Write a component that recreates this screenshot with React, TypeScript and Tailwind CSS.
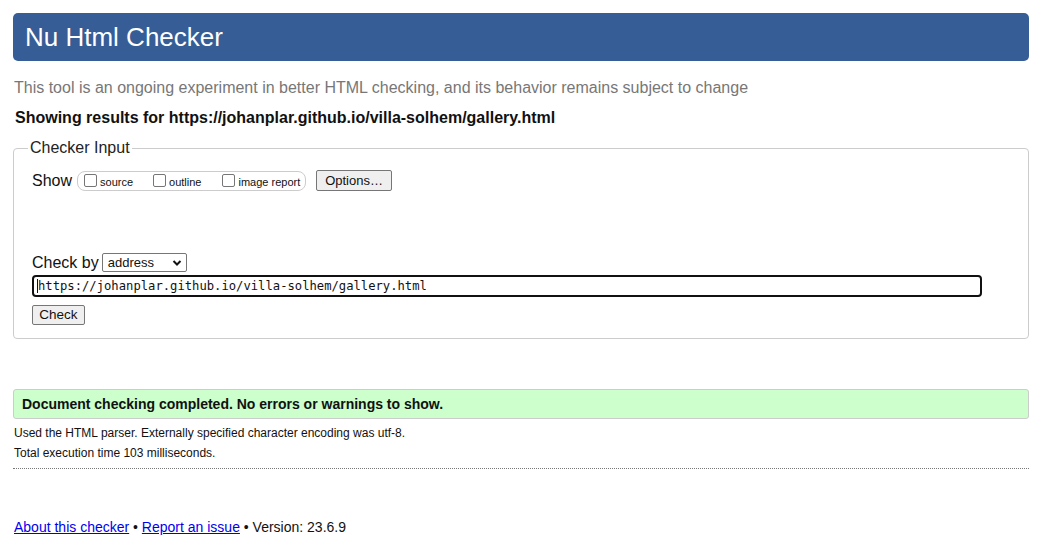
import React from "react";

function Box({ label }: { label: string }) {
  return (
    <span className="flex items-end">
      <span className="block w-[13px] h-[13px] border border-[#767676] rounded-[2px] bg-white" />
      <span className="ml-[3px] text-[11px] leading-[11px] mb-[-1px] text-[#111]">{label}</span>
    </span>
  );
}

export default function App() {
  return (
    <div
      className="bg-white w-[1041px] h-[555px] overflow-hidden pl-[13px] pr-[12px] pt-[13px] text-[#111]"
      style={{ fontFamily: '"Liberation Sans", Arial, sans-serif' }}
    >
      <div className="h-[48px] flex items-center pl-[12px] rounded-[5px] bg-[#365d95] text-white text-[26px] leading-[30px]">
        Nu Html Checker
      </div>
      <p className="mt-[18px] h-[18px] leading-[18px] text-[16px] text-[#777] pl-[1px]">
        This tool is an ongoing experiment in better HTML checking, and its behavior remains subject to change
      </p>
      <p className="mt-[12px] h-[18px] leading-[18px] text-[16px] font-bold pl-[2px]">
        Showing results for https://johanplar.github.io/villa-solhem/gallery.html
      </p>
      <fieldset className="mt-[12px] border border-[#ccc] rounded-[4px] pl-[18px] pb-[13px] h-[200px]">
        <legend className="-ml-[4px] px-[2px] text-[16px] leading-[18px] text-[#222]">Checker Input</legend>
        <div className="mt-[13px] flex items-center h-[21px]">
          <span className="text-[16px] leading-[18px]">Show</span>
          <span className="ml-[5px] flex items-center h-[20px] w-[229px] border border-[#ccc] rounded-[8px] pl-[6px]">
            <Box label="source" />
            <span className="w-[20px]" />
            <Box label="outline" />
            <span className="w-[21px]" />
            <Box label="image report" />
          </span>
          <span className="ml-[10px] flex items-center justify-center w-[76px] h-[21px] border border-[#767676] rounded-[2px] bg-[#efefef] text-[13px]">
            Options…
          </span>
        </div>
        <div className="mt-[62px] flex items-center h-[19px]">
          <span className="text-[16px] leading-[18px]">Check by</span>
          <span className="ml-[3px] flex items-center justify-between w-[85px] h-[19px] border border-[#767676] rounded-[2px] bg-white pl-[5px] pr-[4px] text-[13px]">
            address
            <svg width="10" height="8" viewBox="0 0 10 8">
              <path d="M1.5 2 L5 5.5 L8.5 2" fill="none" stroke="#111" strokeWidth="2" />
            </svg>
          </span>
        </div>
        <div className="mt-[3px] h-[22px] w-[950px] border-2 border-[#111] rounded-[4px] flex items-center pl-[3px]">
          <span className="border-l border-[#111] h-[14px]" />
          <span
            className="text-[12.2px] leading-[14px]"
            style={{ fontFamily: '"DejaVu Sans Mono", "Liberation Mono", monospace' }}
          >
            https://johanplar.github.io/villa-solhem/gallery.html
          </span>
        </div>
        <div className="mt-[8px] flex items-center justify-center w-[53px] h-[20px] border border-[#767676] rounded-[2px] bg-[#efefef] text-[13.5px]">
          Check
        </div>
      </fieldset>
      <div className="mt-[50px] h-[30px] border border-[#ccc] rounded-[3px] bg-[#ccffcc] flex items-center pl-[8px] text-[14px] font-bold">
        Document checking completed. No errors or warnings to show.
      </div>
      <p className="mt-[7px] text-[12px] leading-[14px] pl-[1px]">
        Used the HTML parser. Externally specified character encoding was utf-8.
      </p>
      <p className="mt-[6px] text-[12px] leading-[14px] pl-[1px]">Total execution time 103 milliseconds.</p>
      <div className="mt-[8px] border-t border-dotted border-[#777]" />
      <p className="mt-[50px] text-[14px] leading-[16px] pl-[1px]">
        <a className="text-[#0000ee] underline">About this checker</a> •{" "}
        <a className="text-[#0000ee] underline">Report an issue</a> • Version: 23.6.9
      </p>
    </div>
  );
}
